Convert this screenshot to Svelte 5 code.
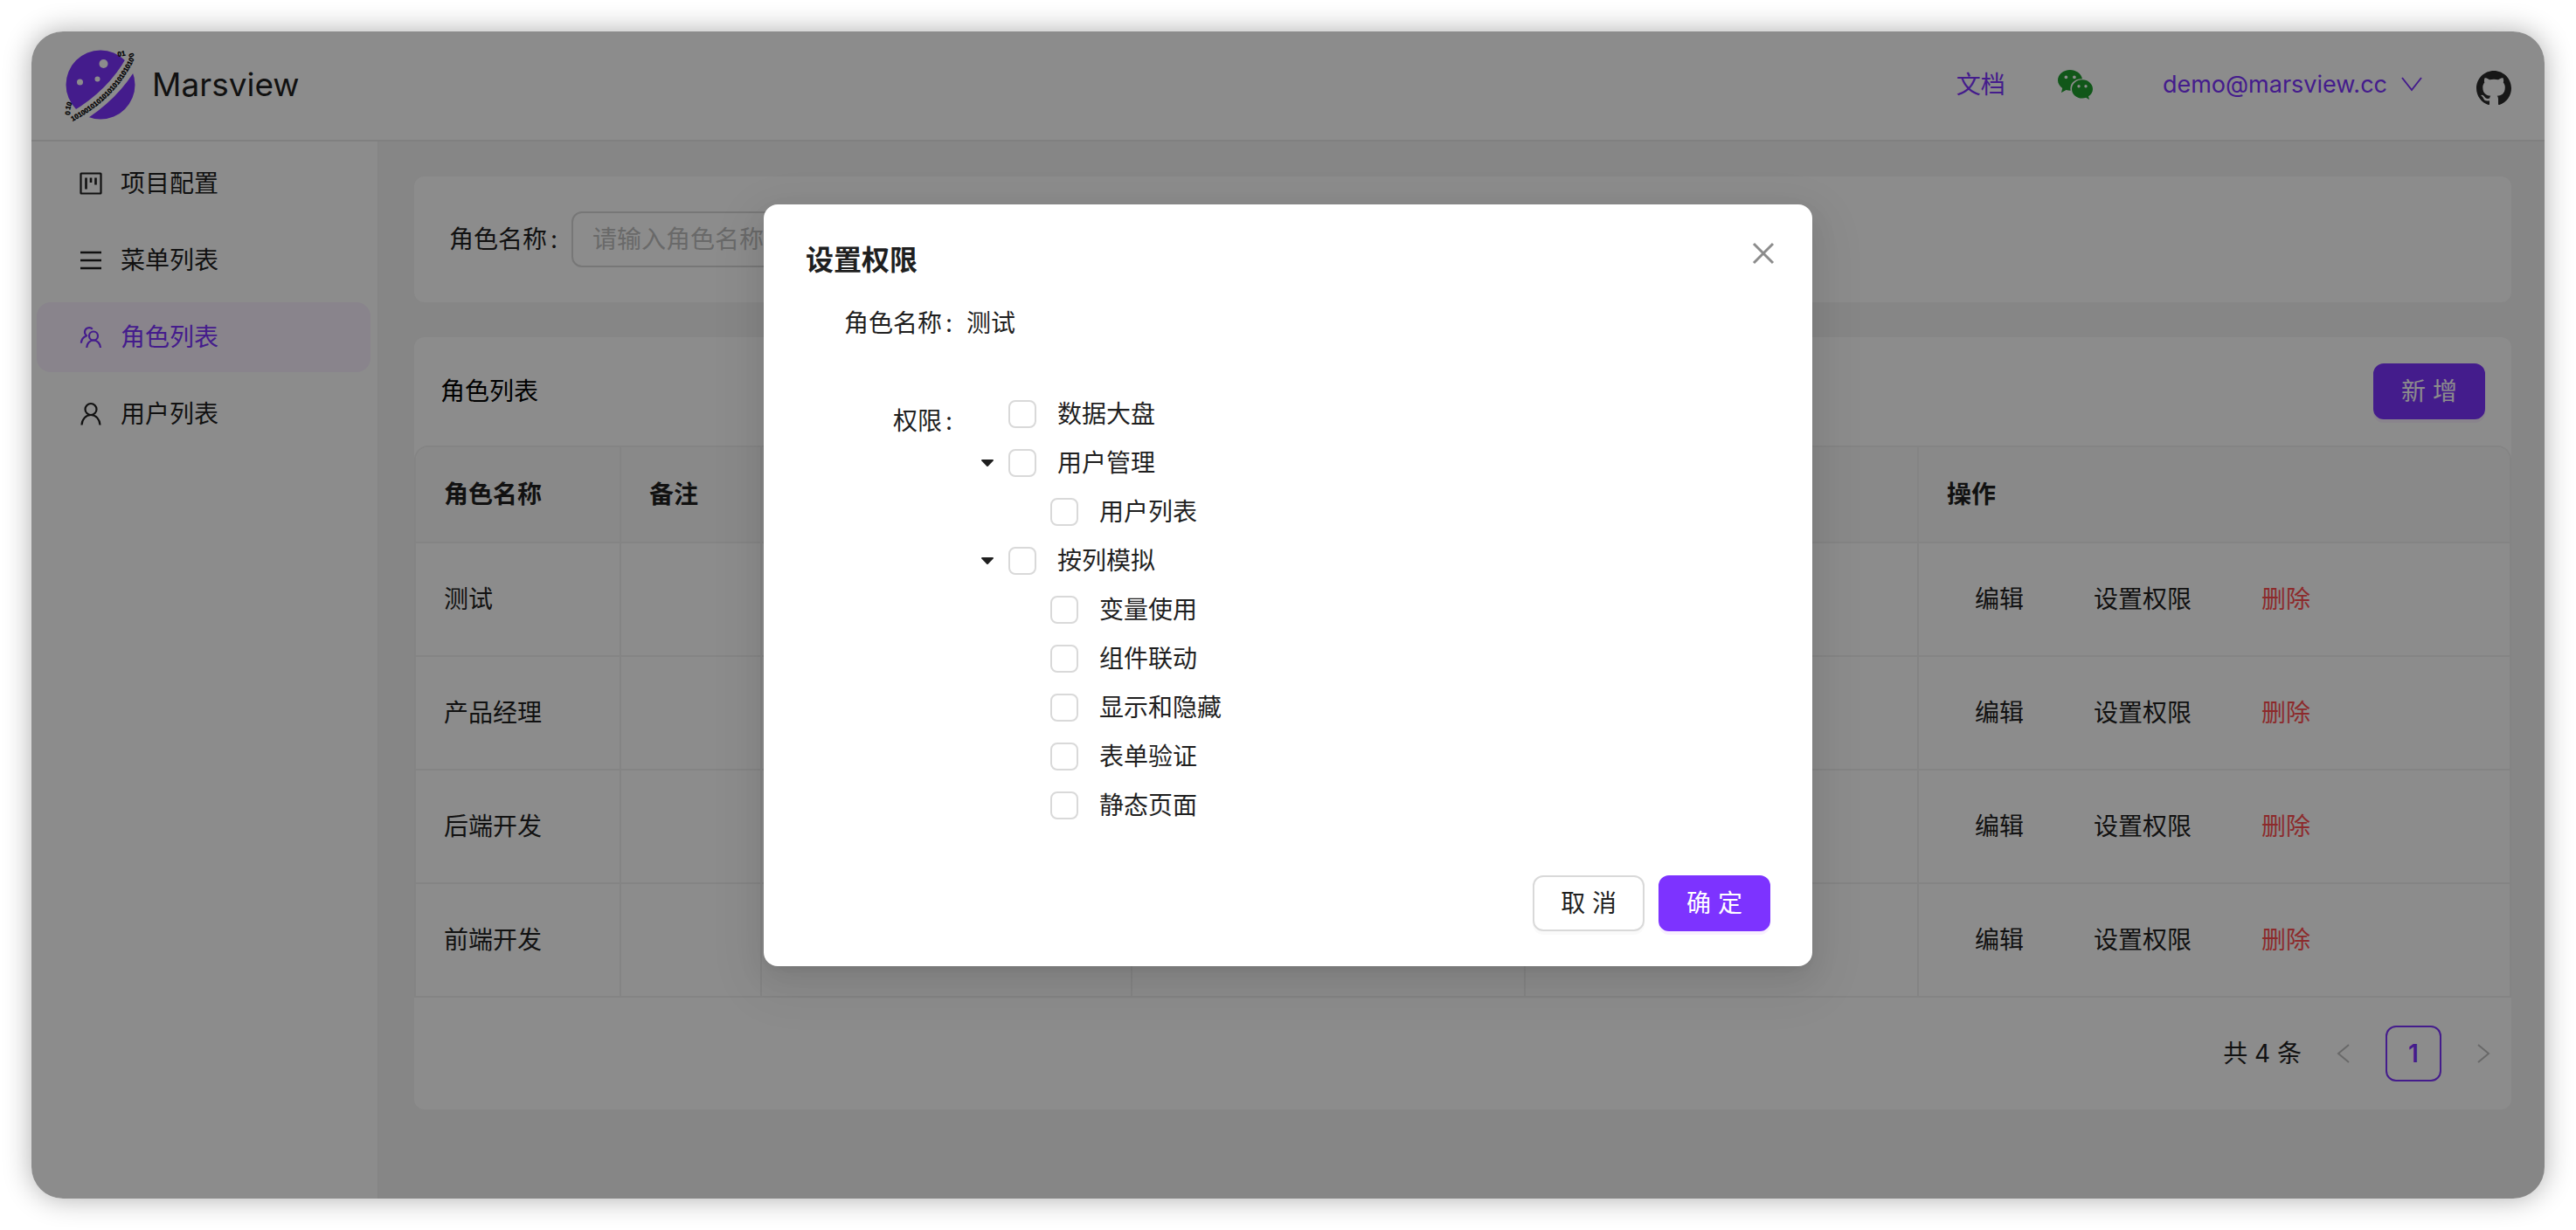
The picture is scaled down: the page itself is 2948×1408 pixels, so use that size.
<script lang="ts">
  const menu = [
    { key: 'project', text: '项目配置' },
    { key: 'menu', text: '菜单列表' },
    { key: 'role', text: '角色列表' },
    { key: 'user', text: '用户列表' },
  ];
  const active = 'role';

  const rows = ['测试', '产品经理', '后端开发', '前端开发'];

  type Node = { id: string; title: string; level: number; parent?: boolean };
  const tree: Node[] = [
    { id: 'dashboard', title: '数据大盘', level: 0 },
    { id: 'user', title: '用户管理', level: 0, parent: true },
    { id: 'user-list', title: '用户列表', level: 1 },
    { id: 'column', title: '按列模拟', level: 0, parent: true },
    { id: 'variable', title: '变量使用', level: 1 },
    { id: 'linkage', title: '组件联动', level: 1 },
    { id: 'visible', title: '显示和隐藏', level: 1 },
    { id: 'form', title: '表单验证', level: 1 },
    { id: 'static', title: '静态页面', level: 1 },
  ];
</script>

{#snippet menuIcon(key: string)}
  <svg class="menu-icon" viewBox="0 0 28 28" fill="none" stroke="currentColor" stroke-width="2.200" aria-hidden="true">
    {#if key === 'project'}
      <rect x="2.500" y="2.500" width="23" height="23" rx="0.500" />
      <path d="M8.500 7.500v13M14 7.500v5.500M19.500 7.500v8" stroke-width="2.600" />
    {:else if key === 'menu'}
      <path d="M2 5h24M2 14h24M2 23h24" stroke-width="2.400" />
    {:else if key === 'role'}
      <circle cx="17" cy="12.500" r="5" />
      <path d="M9.200 26c.2-4.800 3.400-8.500 7.800-8.500s7.800 3.700 8 8.500" />
      <path d="M15.800 4.700A5 5 0 1 0 8.300 11.600l1.500 1.200M8.800 12.500C5.200 13.900 3.100 17 2.900 20.800" />
    {:else}
      <circle cx="14" cy="8.500" r="6.500" />
      <path d="M3.500 26.500c.3-6.300 4.600-11.500 10.500-11.500s10.200 5.200 10.500 11.500" />
    {/if}
  </svg>
{/snippet}

<div class="stage">
  <div class="window">
    <header class="topbar">
      <a class="brand" href="#home">
        <svg class="logo" viewBox="0 0 84 84" aria-hidden="true">
          <defs>
            <path id="ring" d="M11 84Q60 58 81 14" />
            <mask id="cut">
              <rect width="84" height="84" fill="#fff" />
              <path d="M8 84L14 80Q58 54 80 14L82 8" fill="none" stroke="#000" stroke-width="16" />
              <circle cx="46.500" cy="18" r="5" fill="#000" />
              <circle cx="19.500" cy="39" r="3.500" fill="#000" />
              <circle cx="39.500" cy="35.500" r="3" fill="#000" />
            </mask>
          </defs>
          <circle cx="43" cy="42" r="39.500" fill="#7d33ff" mask="url(#cut)" />
          <text class="bits"><textPath href="#ring">10100101010101010101010010</textPath></text>
          <text class="bits" transform="translate(63 10) rotate(-10)">01</text>
          <text class="bits" transform="translate(75 7) rotate(70)">0</text>
          <text class="bits" transform="translate(8 77) rotate(-82)">0</text>
          <text class="bits" transform="translate(8 71) rotate(-75)">10</text>
        </svg>
        <span class="brand-name">Marsview</span>
      </a>
      <nav class="tools">
        <a class="doc" href="#docs">文档</a>
        <a class="wechat" href="#wechat" aria-label="WeChat">
          <svg viewBox="0 0 40 34" aria-hidden="true">
            <path fill="#1f9e2f" fill-rule="evenodd" d="M14 0C6.300 0 0 5.200 0 11.800c0 3.700 2 6.900 5.200 9.100L4 26l5.500-2.900c1.900.5 3.600.6 5.200.6C13 16.500 18.500 10 28 10.200 26.700 4.200 20.800 0 14 0zM9.400 6.400a1.900 1.900 0 1 1 0 3.800 1.900 1.900 0 0 1 0-3.800zm9.500 0a1.900 1.900 0 1 1 0 3.800 1.900 1.900 0 0 1 0-3.800z" />
            <path fill="#1f9e2f" fill-rule="evenodd" d="M28 11.200c-6.800 0-12 4.800-12 10.700s5.200 10.600 12 10.600c1.400 0 2.800-.3 4.200-.7L36 34l-1-3.700c3-2.100 5-5 5-8.400 0-5.900-5.300-10.700-12-10.700zM24 17a1.700 1.700 0 1 1 0 3.400 1.700 1.700 0 0 1 0-3.400zm8 0a1.700 1.700 0 1 1 0 3.400 1.700 1.700 0 0 1 0-3.400z" />
          </svg>
        </a>
        <button class="account" type="button">
          demo@marsview.cc
          <svg viewBox="0 0 24 24" fill="none" stroke="currentColor" stroke-width="2" aria-hidden="true"><path d="M1 4l11 14L23 4" /></svg>
        </button>
        <a class="github" href="#github" aria-label="GitHub">
          <svg viewBox="0 0 16 16" aria-hidden="true">
            <path fill="#2b2b2b" d="M8 0C3.580 0 0 3.580 0 8c0 3.540 2.290 6.530 5.470 7.590.4.070.55-.17.55-.38 0-.19-.01-.82-.01-1.490-2.010.37-2.530-.49-2.690-.94-.09-.23-.48-.94-.82-1.130-.28-.15-.68-.52-.01-.53.63-.01 1.080.58 1.230.82.72 1.210 1.870.87 2.330.66.07-.52.28-.87.51-1.070-1.780-.2-3.640-.89-3.640-3.950 0-.87.31-1.590.82-2.150-.08-.2-.36-1.020.08-2.120 0 0 .67-.21 2.200.82.64-.18 1.320-.27 2-.27s1.360.09 2 .27c1.530-1.040 2.200-.82 2.200-.82.44 1.100.16 1.920.08 2.120.51.56.82 1.270.82 2.150 0 3.070-1.870 3.750-3.650 3.950.29.25.54.73.54 1.480 0 1.070-.01 1.930-.01 2.200 0 .21.15.46.55.38A8.010 8.010 0 0 0 16 8c0-4.420-3.580-8-8-8z" />
          </svg>
        </a>
      </nav>
    </header>

    <div class="body">
      <aside class="sidebar">
        {#each menu as item}
          <a class="menu-item" class:active={item.key === active} href={'#' + item.key}>
            {@render menuIcon(item.key)}
            <span>{item.text}</span>
          </a>
        {/each}
      </aside>

      <main class="content">
        <form class="card search">
          <label class="label" for="role-name">角色名称<span class="colon">:</span></label>
          <input id="role-name" class="text-input" type="text" placeholder="请输入角色名称" />
        </form>

        <section class="card">
          <div class="card-head">
            <span class="card-title">角色列表</span>
            <button class="btn primary" type="button">新 增</button>
          </div>
          <table class="grid">
            <colgroup>
              <col class="c-name" />
              <col class="c-note" />
              <col class="c-third" />
              <col class="c-time" />
              <col class="c-time" />
              <col />
            </colgroup>
            <thead>
              <tr>
                <th>角色名称</th>
                <th>备注</th>
                <th></th>
                <th></th>
                <th></th>
                <th>操作</th>
              </tr>
            </thead>
            <tbody>
              {#each rows as name}
                <tr>
                  <td>{name}</td>
                  <td></td>
                  <td></td>
                  <td></td>
                  <td></td>
                  <td>
                    <div class="actions">
                      <button class="link" type="button">编辑</button>
                      <button class="link" type="button">设置权限</button>
                      <button class="link danger" type="button">删除</button>
                    </div>
                  </td>
                </tr>
              {/each}
            </tbody>
          </table>
          <nav class="pagination" aria-label="pagination">
            <span>共 4 条</span>
            <button class="page" type="button" disabled aria-label="prev">
              <svg viewBox="0 0 24 24" fill="none" stroke="currentColor" stroke-width="2" aria-hidden="true"><path d="M18 2L6 12l12 10" /></svg>
            </button>
            <button class="page current" type="button">1</button>
            <button class="page" type="button" disabled aria-label="next">
              <svg viewBox="0 0 24 24" fill="none" stroke="currentColor" stroke-width="2" aria-hidden="true"><path d="M6 2l12 10L6 22" /></svg>
            </button>
          </nav>
        </section>
      </main>
    </div>

    <div class="mask">
      <div class="modal" role="dialog" aria-modal="true" aria-labelledby="modal-title">
        <button class="close" type="button" aria-label="close">
          <svg viewBox="0 0 28 28" fill="none" stroke="currentColor" stroke-width="3" aria-hidden="true"><path d="M3 3l22 22M25 3L3 25" /></svg>
        </button>
        <h2 id="modal-title">设置权限</h2>
        <div class="form-row first">
          <span class="label">角色名称<span class="colon">:</span></span>
          <span class="value">测试</span>
        </div>
        <div class="form-row">
          <span class="label">权限<span class="colon">:</span></span>
          <ul class="tree">
            {#each tree as node}
              <li class="node" class:child={node.level === 1}>
                {#if node.parent}
                  <button class="switcher" type="button" aria-label="collapse">
                    <svg viewBox="0 0 14 8" aria-hidden="true"><path fill="currentColor" d="M1 0h12c.8 0 1.200.9.7 1.500L7.700 7.700a1 1 0 0 1-1.400 0L.3 1.500C-.2.9.2 0 1 0z" /></svg>
                  </button>
                {:else}
                  <span class="switcher"></span>
                {/if}
                <input id={node.id} type="checkbox" />
                <label for={node.id}>{node.title}</label>
              </li>
            {/each}
          </ul>
        </div>
        <div class="footer">
          <button class="btn" type="button">取 消</button>
          <button class="btn primary" type="button">确 定</button>
        </div>
      </div>
    </div>
  </div>
</div>

<style>
  :global(body) {
    background: #fff;
  }

  .stage,
  .stage :global(*) {
    box-sizing: border-box;
  }

  .stage {
    min-height: 100vh;
    padding: 36px;
    display: flex;
    font-family: Inter, 'Noto Sans CJK SC', sans-serif;
    font-size: 28px;
    line-height: 44px;
    color: #1f1f1f;
  }

  button,
  input {
    font: inherit;
    color: inherit;
    margin: 0;
  }

  button {
    background: none;
    border: 0;
    padding: 0;
    cursor: pointer;
    white-space: nowrap;
  }

  a {
    color: inherit;
    text-decoration: none;
  }

  svg {
    display: block;
  }

  .window {
    position: relative;
    flex: 1;
    min-width: 0;
    display: flex;
    flex-direction: column;
    border-radius: 36px;
    overflow: hidden;
    background: #f5f5f5;
    box-shadow: 0 0 32px rgba(0, 0, 0, 0.32);
  }

  .topbar {
    display: flex;
    align-items: center;
    justify-content: space-between;
    height: 126px;
    padding: 0 38px 2px 36px;
    background: #fff;
    border-bottom: 2px solid #eaeaea;
  }

  .brand {
    display: flex;
    align-items: center;
    gap: 18px;
  }

  .logo {
    width: 84px;
    height: 84px;
    overflow: visible;
  }

  .bits {
    font-family: 'Liberation Sans Narrow', 'Liberation Sans', sans-serif;
    font-size: 8px;
    font-weight: 700;
    fill: #000;
    stroke: #000;
    stroke-width: 0.3;
  }

  .brand-name {
    font-size: 37px;
  }

  .tools {
    display: flex;
    align-items: center;
    color: #7d33ff;
  }

  .doc {
    margin-right: 60px;
  }

  .wechat {
    width: 40px;
    margin-right: 80px;
  }

  .account {
    display: flex;
    align-items: center;
    gap: 16px;
    margin-right: 62px;
    font-size: 27px;
  }

  .account svg {
    width: 24px;
    height: 24px;
  }

  .github {
    width: 40px;
    padding-top: 8px;
  }

  .body {
    flex: 1;
    display: flex;
  }

  .sidebar {
    width: 398px;
    flex: none;
    display: flex;
    flex-direction: column;
    gap: 8px;
    padding: 8px 8px 8px 6px;
    background: #fff;
    border-right: 2px solid #f2f2f2;
  }

  .menu-item {
    display: flex;
    align-items: center;
    gap: 20px;
    height: 80px;
    padding: 0 48px;
    border-radius: 16px;
  }

  .menu-item.active {
    background: #f9f0ff;
    color: #7d33ff;
  }

  .menu-icon {
    width: 28px;
    height: 28px;
  }

  .content {
    flex: 1;
    min-width: 0;
    display: flex;
    flex-direction: column;
    gap: 40px;
    padding: 40px 38px 40px 40px;
  }

  .card {
    background: #fff;
    border-radius: 12px;
  }

  .search {
    display: flex;
    align-items: center;
    padding: 40px;
  }

  .label {
    flex: none;
    display: flex;
    justify-content: flex-end;
  }

  .colon {
    width: 8px;
    margin: 0 16px 0 4px;
  }

  .text-input {
    width: 440px;
    height: 64px;
    padding: 0 22px;
    border: 2px solid #d9d9d9;
    border-radius: 12px;
    background: #fff;
  }

  .text-input::placeholder {
    color: #bfbfbf;
    opacity: 1;
  }

  .card-head {
    display: flex;
    align-items: center;
    justify-content: space-between;
    padding: 30px;
  }

  .card-title {
    color: #000;
  }

  .btn {
    height: 64px;
    padding: 0 30px;
    border: 2px solid #d9d9d9;
    border-radius: 12px;
    background: #fff;
    box-shadow: 0 4px 0 rgba(0, 0, 0, 0.02);
  }

  .btn.primary {
    background: #7d33ff;
    border-color: #7d33ff;
    color: #fff;
    box-shadow: 0 4px 0 #f9f0ff;
  }

  .grid {
    width: 100%;
    table-layout: fixed;
    border-collapse: separate;
    border-spacing: 0;
    border: 2px solid #f0f0f0;
    border-bottom: 0;
    border-radius: 16px 16px 0 0;
    overflow: hidden;
  }

  .c-name {
    width: 235px;
  }

  .c-note {
    width: 161px;
  }

  .c-third {
    width: 424px;
  }

  .c-time {
    width: 450px;
  }

  th,
  td {
    padding: 0 32px;
    text-align: left;
    border-bottom: 2px solid #f0f0f0;
    border-right: 2px solid #f0f0f0;
  }

  th:last-child,
  td:last-child {
    border-right: 0;
  }

  th {
    height: 110px;
    background: #fafafa;
    font-weight: 600;
  }

  td {
    height: 130px;
  }

  .actions {
    display: flex;
    gap: 16px;
  }

  .link {
    height: 64px;
    padding: 0 32px;
  }

  .link.danger {
    color: #ff4d4f;
  }

  .pagination {
    display: flex;
    justify-content: flex-end;
    align-items: center;
    gap: 16px;
    padding: 32px 0;
  }

  .page {
    width: 64px;
    height: 64px;
    border-radius: 12px;
    display: flex;
    align-items: center;
    justify-content: center;
  }

  .page:disabled {
    color: #bfbfbf;
  }

  .page svg {
    width: 24px;
    height: 24px;
  }

  .page.current {
    border: 2px solid #7d33ff;
    color: #7d33ff;
    font-weight: 600;
  }

  .mask {
    position: absolute;
    inset: 0;
    display: flex;
    justify-content: center;
    align-items: flex-start;
    padding-top: 198px;
    background: rgba(0, 0, 0, 0.45);
  }

  .modal {
    position: relative;
    width: 1200px;
    padding: 40px 48px;
    background: #fff;
    border-radius: 16px;
    box-shadow:
      0 12px 32px rgba(0, 0, 0, 0.08),
      0 6px 12px -8px rgba(0, 0, 0, 0.12),
      0 18px 56px 16px rgba(0, 0, 0, 0.05);
  }

  .close {
    position: absolute;
    top: 24px;
    right: 24px;
    width: 64px;
    height: 64px;
    display: flex;
    align-items: center;
    justify-content: center;
    color: #8c8c8c;
  }

  .close svg {
    width: 28px;
    height: 28px;
  }

  h2 {
    margin: 0 0 16px;
    font-size: 32px;
    line-height: 48px;
    font-weight: 600;
  }

  .form-row {
    display: flex;
    align-items: flex-start;
  }

  .form-row.first {
    margin-bottom: 48px;
  }

  .form-row .label {
    width: 184px;
    line-height: 64px;
  }

  .value {
    line-height: 64px;
  }

  .tree {
    list-style: none;
    margin: 0;
    padding: 0;
  }

  .node {
    display: flex;
    align-items: center;
    height: 48px;
    margin-bottom: 8px;
  }

  .node.child {
    padding-left: 48px;
  }

  .switcher {
    width: 48px;
    height: 48px;
    display: flex;
    align-items: center;
    justify-content: center;
  }

  .switcher svg {
    width: 14px;
    height: 8px;
  }

  .node input {
    appearance: none;
    width: 32px;
    height: 32px;
    margin-right: 16px;
    border: 2px solid #d9d9d9;
    border-radius: 8px;
    background: #fff;
  }

  .node label {
    padding: 0 8px;
  }

  .footer {
    display: flex;
    justify-content: flex-end;
    gap: 16px;
    margin-top: 48px;
  }
</style>
